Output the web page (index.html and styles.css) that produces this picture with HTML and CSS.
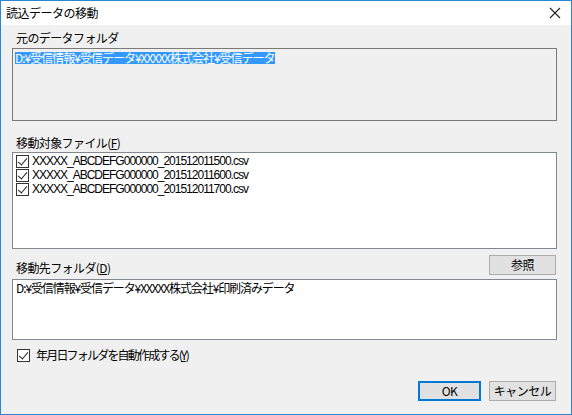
FILE: index.html
```html
<!DOCTYPE html>
<html lang="ja">
<head>
  <meta charset="UTF-8">
  <title>読込データの移動</title>
  <link rel="stylesheet" href="styles.css">
</head>
<body>
  <div class="dialog">
    <div class="titlebar">
      <span class="title">読込データの移動</span>
      <svg class="close" width="12" height="12" viewBox="0 0 12 12">
        <path d="M1 1L11 11M11 1L1 11" stroke="#222" stroke-width="1.1" fill="none"/>
      </svg>
    </div>
    <div class="content">
      <div class="label first">元のデータフォルダ</div>
      <div class="box readonly src">
        <span class="selected">D:¥受信情報¥受信データ¥XXXXX株式会社¥受信データ</span>
      </div>

      <div class="label">移動対象ファイル(<u>F</u>)</div>
      <div class="box list">
        <div class="item"><span class="check"></span>XXXXX_ABCDEFG000000_201512011500.csv</div>
        <div class="item"><span class="check"></span>XXXXX_ABCDEFG000000_201512011600.csv</div>
        <div class="item"><span class="check"></span>XXXXX_ABCDEFG000000_201512011700.csv</div>
      </div>

      <div class="dest-row">
        <div class="label">移動先フォルダ(<u>D</u>)</div>
        <button class="btn browse">参照</button>
      </div>
      <div class="box dest">D:¥受信情報¥受信データ¥XXXXX株式会社¥印刷済みデータ</div>

      <div class="option"><span class="check"></span>年月日フォルダを自動作成する(<u>Y</u>)</div>

      <div class="actions">
        <button class="btn ok">OK</button>
        <button class="btn">キャンセル</button>
      </div>
    </div>
  </div>
</body>
</html>
```

FILE: styles.css
```css
* {
  margin: 0;
  padding: 0;
  box-sizing: border-box;
}

body {
  font-family: "Noto Sans CJK JP", "Noto Sans", sans-serif;
  font-size: 12px;
  line-height: 14px;
  color: #000;
  background: #fff;
}

.dialog {
  width: 572px;
  height: 415px;
  border: 1px solid #2b87cf;
  background: #f0f0f0;
  display: flex;
  flex-direction: column;
}

.titlebar {
  height: 24px;
  flex: none;
  background: #fff;
  display: flex;
  align-items: center;
  justify-content: space-between;
  padding: 0 10px 0 5px;
}

.title {
  font-size: 12px;
  letter-spacing: -0.5px;
}

.content {
  padding: 0 14px 0 11px;
  display: flex;
  flex-direction: column;
}

.label {
  height: 14px;
  padding-left: 4px;
  letter-spacing: -0.6px;
}

.label.first {
  margin-top: 6px;
}

.box {
  border: 1px solid #828790;
  background: #fff;
  flex: none;
}

.readonly {
  background: #f0f0f0;
  border-color: #7a7a7a;
}

.src {
  height: 73px;
  margin-top: 3px;
  padding: 2px 2px;
  margin-bottom: 15px;
}

.selected {
  background: #3399ff;
  color: #fff;
  line-height: 12px;
  display: inline-block;
  letter-spacing: -1px;
}

.list {
  height: 97px;
  margin-top: 2px;
  padding: 1px 3px;
  margin-bottom: 6px;
}

.item {
  height: 14px;
  display: flex;
  align-items: center;
  font-family: "Liberation Sans", Arial, sans-serif;
  letter-spacing: -1px;
}

.check {
  width: 13px;
  height: 13px;
  border: 1px solid #333;
  background: #fff;
  margin-right: 3px;
  position: relative;
  flex: none;
}

.check::after {
  content: "";
  position: absolute;
  left: 3px;
  top: 0px;
  width: 4px;
  height: 8px;
  border: solid #222;
  border-width: 0 1px 1px 0;
  transform: rotate(40deg);
}

.dest-row {
  display: flex;
  justify-content: space-between;
  align-items: flex-end;
  height: 20px;
}

.btn {
  font-family: inherit;
  font-size: 12px;
  line-height: 14px;
  width: 67px;
  height: 20px;
  background: #e1e1e1;
  border: 1px solid #adadad;
  color: #000;
  letter-spacing: -0.5px;
}

.browse {
  margin-right: 1px;
}

.dest {
  height: 61px;
  margin-top: 4px;
  padding: 1px 3px;
  letter-spacing: -1.1px;
}

.option {
  display: flex;
  align-items: center;
  margin-top: 8px;
  padding-left: 5px;
  height: 14px;
  letter-spacing: -1.8px;
}

.option .check {
  margin-right: 6px;
}

.actions {
  display: flex;
  justify-content: flex-end;
  gap: 8px;
  margin-top: 19px;
  padding-right: 1px;
}

.ok {
  width: 63px;
  border: 2px solid #0078d7;
}
```
